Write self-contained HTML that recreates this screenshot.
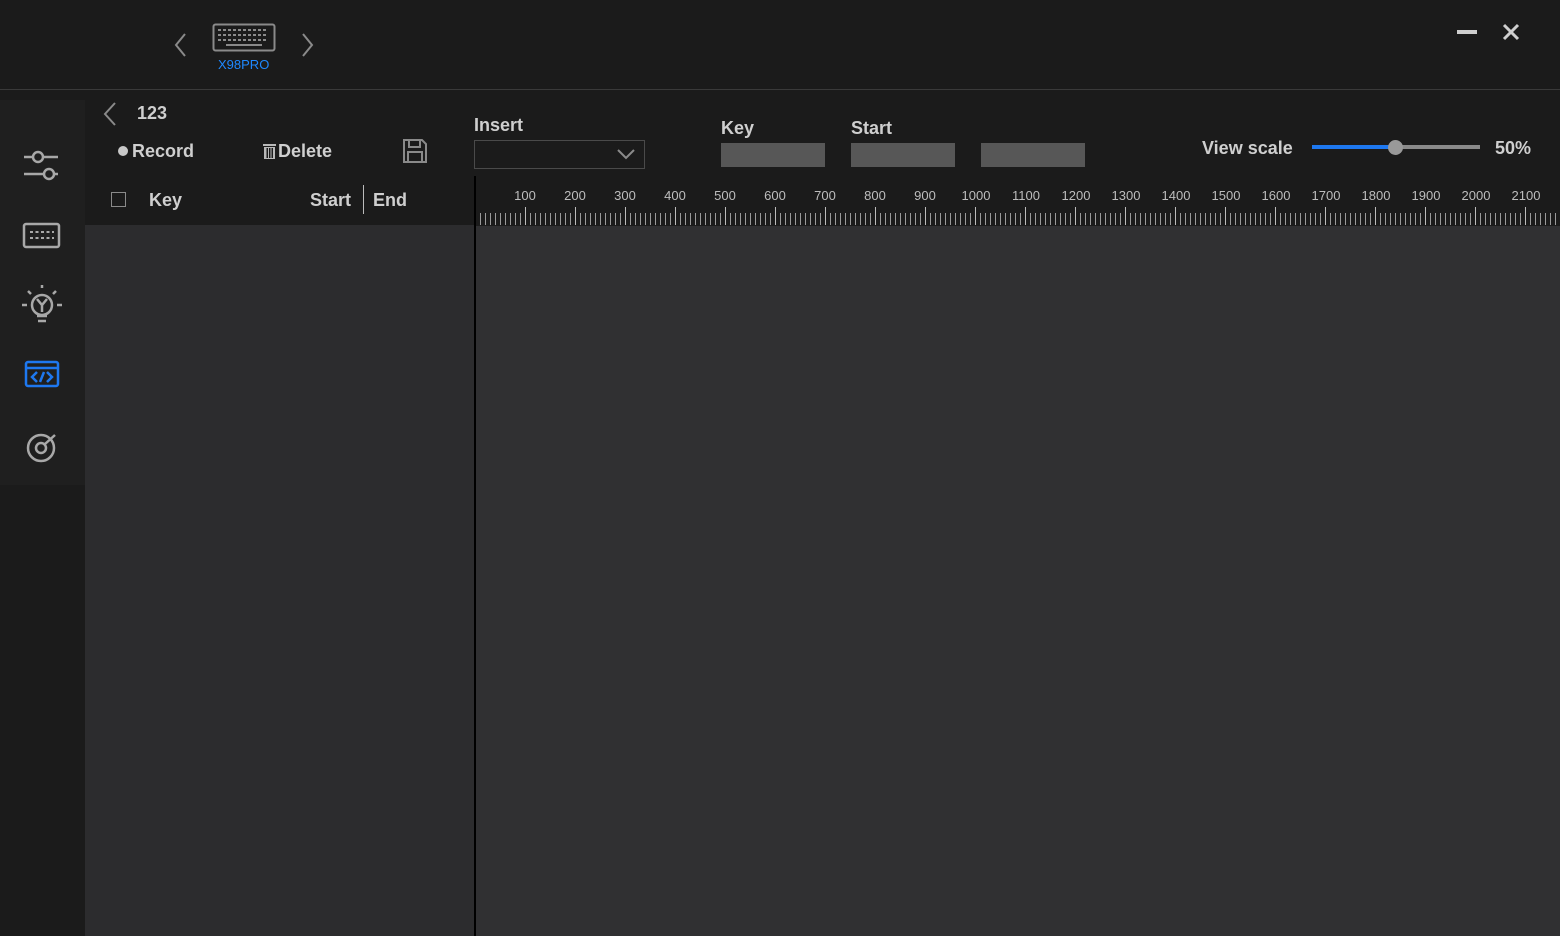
<!DOCTYPE html>
<html><head><style>
*{margin:0;padding:0;box-sizing:border-box}
body{width:1560px;height:936px;background:#1b1b1b;font-family:"Liberation Sans",Arial,sans-serif;color:#c8c8c8;position:relative;overflow:hidden}
.a{position:absolute}
.b{font-weight:bold;font-size:18px;color:#cfcfcf}
.box{background:#575757;height:24px;width:104px;top:143px}
.num{font-size:13px;color:#bdbdbd;top:188px;width:50px;text-align:center}
</style></head><body>
<div class="a" style="left:0;top:89px;width:1560px;height:1px;background:#3a3a3a"></div>
<!-- device -->
<svg class="a" style="left:170px;top:30px" width="20" height="30"><path d="M15 4 L6 15 L15 26" stroke="#8a8a8a" stroke-width="2" fill="none"/></svg>
<svg class="a" style="left:298px;top:30px" width="20" height="30"><path d="M5 4 L14 15 L5 26" stroke="#8a8a8a" stroke-width="2" fill="none"/></svg>
<svg class="a" style="left:212px;top:23px" width="64" height="30"><rect x="1.5" x1="0" y="1.5" width="61" height="26" rx="2" stroke="#8a8a8a" stroke-width="2" fill="none"/>
<g fill="#8a8a8a"><rect x="6" y="6" width="52" height="2" fill="none"/>
<path d="M6 7h50M6 12h50M6 17h50" stroke="#8a8a8a" stroke-width="2" stroke-dasharray="3 2"/><rect x="14" y="21" width="36" height="2"/></g></svg>
<div class="a" style="left:218px;top:57px;font-size:13px;color:#1e88ff">X98PRO</div>
<div class="a" style="left:1457px;top:30px;width:20px;height:4px;background:#cfcfcf"></div>
<svg class="a" style="left:1502px;top:23px" width="18" height="18"><path d="M2 2L16 16M16 2L2 16" stroke="#cfcfcf" stroke-width="3"/></svg>
<!-- sidebar -->
<div class="a" style="left:0;top:100px;width:85px;height:385px;background:#1f1f1f"></div>
<svg class="a" style="left:22px;top:148px" width="40" height="36" fill="none" stroke="#a8a8a8" stroke-width="2.5"><path d="M2 9h34M2 26h34"/><circle cx="16" cy="9" r="5" fill="#1f1f1f"/><circle cx="27" cy="26" r="5" fill="#1f1f1f"/></svg>
<svg class="a" style="left:22px;top:222px" width="40" height="28" fill="none" stroke="#a8a8a8" stroke-width="2.5"><rect x="2" y="2" width="35" height="23" rx="2"/><path d="M8 10h24M8 16h24" stroke-dasharray="3 2.5" stroke-width="2"/></svg>
<svg class="a" style="left:20px;top:285px" width="44" height="42" fill="none" stroke="#a8a8a8" stroke-width="2.5"><circle cx="22" cy="20" r="10"/><path d="M17 31h10M18 36h8M17 14l5 6 5-6M22 20v7M2 20h5M37 20h5M8 6l3 3M36 6l-3 3M22 0v3"/></svg>
<svg class="a" style="left:24px;top:360px" width="36" height="28" fill="none" stroke="#1e78f0" stroke-width="2.5"><rect x="2" y="2" width="32" height="24" rx="2"/><path d="M2 8h32M13 12l-5 5 5 5M23 12l5 5-5 5M20 12l-4 10"/></svg>
<svg class="a" style="left:24px;top:430px" width="36" height="36" fill="none" stroke="#a8a8a8" stroke-width="2.5"><circle cx="17" cy="18" r="13"/><circle cx="17" cy="18" r="5"/><path d="M21 14L31 5"/></svg>
<!-- left list -->
<svg class="a" style="left:100px;top:100px" width="20" height="28"><path d="M15 3L5 14L15 25" stroke="#8a8a8a" stroke-width="2" fill="none"/></svg>
<div class="a b" style="left:137px;top:103px">123</div>
<div class="a" style="left:118px;top:146px;width:10px;height:10px;border-radius:50%;background:#c8c8c8"></div>
<div class="a b" style="left:132px;top:141px">Record</div>
<svg class="a" style="left:263px;top:144px" width="14" height="15" fill="#b8b8b8"><rect x="0" y="0" width="13" height="2"/><path d="M1 3h11v12H1z M3.5 4v10h1.5V4z M6 4v10h1.5V4z M8.5 4v10H10V4z" fill-rule="evenodd"/></svg>
<div class="a b" style="left:278px;top:141px">Delete</div>
<svg class="a" style="left:402px;top:138px" width="26" height="26" fill="none" stroke="#8a8a8a" stroke-width="2"><path d="M2 2h18l4 4v18H2z"/><rect x="7" y="2" width="11" height="7"/><rect x="6" y="14" width="14" height="10"/></svg>
<div class="a" style="left:111px;top:192px;width:15px;height:15px;border:1.5px solid #8a8a8a"></div>
<div class="a b" style="left:149px;top:190px">Key</div>
<div class="a b" style="left:310px;top:190px">Start</div>
<div class="a" style="left:363px;top:185px;width:1px;height:29px;background:#bbb"></div>
<div class="a b" style="left:373px;top:190px">End</div>
<div class="a" style="left:85px;top:225px;width:389px;height:711px;background:#2c2c2e"></div>
<div class="a" style="left:474px;top:176px;width:2px;height:760px;background:#000"></div>
<!-- right controls -->
<div class="a b" style="left:474px;top:115px">Insert</div>
<div class="a" style="left:474px;top:140px;width:171px;height:29px;border:1.5px solid #4a4a4a"></div>
<svg class="a" style="left:616px;top:147px" width="20" height="14"><path d="M2 3l8 8 8-8" stroke="#8a8a8a" stroke-width="2" fill="none"/></svg>
<div class="a b" style="left:721px;top:118px">Key</div>
<div class="a b" style="left:851px;top:118px">Start</div>
<div class="a box" style="left:721px"></div>
<div class="a box" style="left:851px"></div>
<div class="a box" style="left:981px"></div>
<div class="a b" style="left:1202px;top:138px">View scale</div>
<div class="a" style="left:1312px;top:145px;width:84px;height:4px;background:#1e78f0"></div>
<div class="a" style="left:1396px;top:145px;width:84px;height:4px;background:#8a8a8a"></div>
<div class="a" style="left:1388px;top:140px;width:15px;height:15px;border-radius:50%;background:#999"></div>
<div class="a b" style="left:1495px;top:138px">50%</div>
<!-- ruler -->
<div class="a" style="left:478px;top:213px;width:1082px;height:12px;background:repeating-linear-gradient(90deg,transparent 0 2px,#9a9a9a 2px 3px,transparent 3px 5px)"></div>
<div class="a" style="left:478px;top:207px;width:1082px;height:18px;background:repeating-linear-gradient(90deg,transparent 0 47px,#bbb 47px 48px,transparent 48px 50px)"></div>
<div class="a" style="left:476px;top:226px;width:1084px;height:710px;background:#303032"></div>
<div class="a num" style="left:500px">100</div><div class="a num" style="left:550px">200</div><div class="a num" style="left:600px">300</div><div class="a num" style="left:650px">400</div><div class="a num" style="left:700px">500</div><div class="a num" style="left:750px">600</div><div class="a num" style="left:800px">700</div><div class="a num" style="left:850px">800</div><div class="a num" style="left:900px">900</div><div class="a num" style="left:951px">1000</div><div class="a num" style="left:1001px">1100</div><div class="a num" style="left:1051px">1200</div><div class="a num" style="left:1101px">1300</div><div class="a num" style="left:1151px">1400</div><div class="a num" style="left:1201px">1500</div><div class="a num" style="left:1251px">1600</div><div class="a num" style="left:1301px">1700</div><div class="a num" style="left:1351px">1800</div><div class="a num" style="left:1401px">1900</div><div class="a num" style="left:1451px">2000</div><div class="a num" style="left:1501px">2100</div>
</body></html>
